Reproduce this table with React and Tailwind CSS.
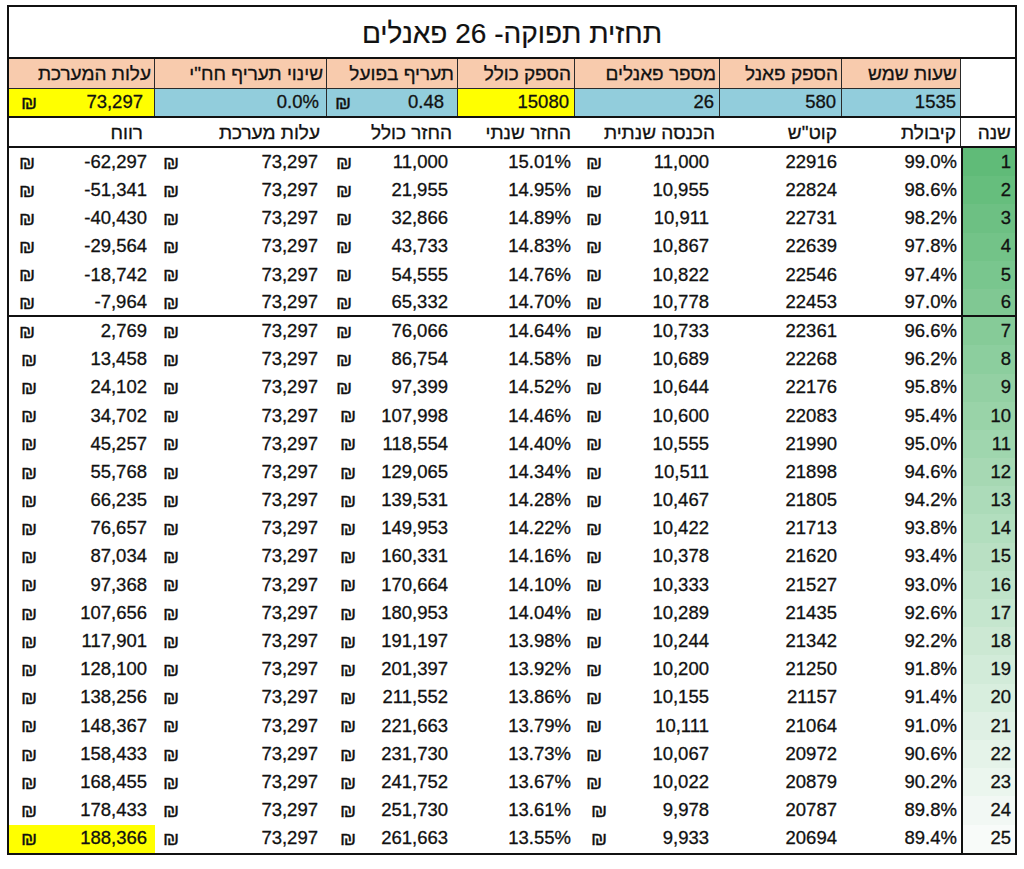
import React from "react";

// נתוני תחזית ל-25 שנה: רווח, החזר כולל, החזר שנתי, הכנסה שנתית, קוט"ש, קיבולת
const rows = [
  ["-62,297", "11,000", "15.01%", "11,000", "22916", "99.0%"],
  ["-51,341", "21,955", "14.95%", "10,955", "22824", "98.6%"],
  ["-40,430", "32,866", "14.89%", "10,911", "22731", "98.2%"],
  ["-29,564", "43,733", "14.83%", "10,867", "22639", "97.8%"],
  ["-18,742", "54,555", "14.76%", "10,822", "22546", "97.4%"],
  ["-7,964", "65,332", "14.70%", "10,778", "22453", "97.0%"],
  ["2,769", "76,066", "14.64%", "10,733", "22361", "96.6%"],
  ["13,458", "86,754", "14.58%", "10,689", "22268", "96.2%"],
  ["24,102", "97,399", "14.52%", "10,644", "22176", "95.8%"],
  ["34,702", "107,998", "14.46%", "10,600", "22083", "95.4%"],
  ["45,257", "118,554", "14.40%", "10,555", "21990", "95.0%"],
  ["55,768", "129,065", "14.34%", "10,511", "21898", "94.6%"],
  ["66,235", "139,531", "14.28%", "10,467", "21805", "94.2%"],
  ["76,657", "149,953", "14.22%", "10,422", "21713", "93.8%"],
  ["87,034", "160,331", "14.16%", "10,378", "21620", "93.4%"],
  ["97,368", "170,664", "14.10%", "10,333", "21527", "93.0%"],
  ["107,656", "180,953", "14.04%", "10,289", "21435", "92.6%"],
  ["117,901", "191,197", "13.98%", "10,244", "21342", "92.2%"],
  ["128,100", "201,397", "13.92%", "10,200", "21250", "91.8%"],
  ["138,256", "211,552", "13.86%", "10,155", "21157", "91.4%"],
  ["148,367", "221,663", "13.79%", "10,111", "21064", "91.0%"],
  ["158,433", "231,730", "13.73%", "10,067", "20972", "90.6%"],
  ["168,455", "241,752", "13.67%", "10,022", "20879", "90.2%"],
  ["178,433", "251,730", "13.61%", "9,978", "20787", "89.8%"],
  ["188,366", "261,663", "13.55%", "9,933", "20694", "89.4%"],
];

const GRID8 = "grid grid-cols-[146px_172px_131px_117px_145px_122px_119px_54px]";
const GRID7 = "grid grid-cols-[146px_172px_131px_117px_145px_122px_119px]";

/** סולם צבע ירוק-לבן לעמודת השנה, כמו עיצוב מותנה באקסל */
function yearColor(i) {
  const a = [0x60, 0xbb, 0x78];
  const b = [0xf8, 0xfb, 0xf9];
  const t = i / (rows.length - 1);
  const c = a.map((v, k) => Math.round(v + (b[k] - v) * t));
  return `rgb(${c[0]}, ${c[1]}, ${c[2]})`;
}

function Money({ value, className = "", shekel = "pl-[10px]", valuePad = "pr-[8px]" }) {
  return (
    <div className={`flex h-full items-center justify-between ${className}`}>
      <span className={`text-[19px] ${shekel}`}>₪</span>
      <span className={valuePad}>{value}</span>
    </div>
  );
}

function Heb({ children, className = "" }) {
  return (
    <div dir="rtl" className={`flex h-full items-center text-[19px] ${className}`}>
      {children}
    </div>
  );
}

function Num({ children, className = "", style }) {
  return (
    <div className={`flex h-full items-center justify-end ${className}`} style={style}>
      {children}
    </div>
  );
}

export default function App() {
  return (
    <div className="h-[869px] w-[1024px] bg-white pl-[7px] pt-[5px] font-['Liberation_Sans','DejaVu_Sans',sans-serif] text-[18.5px] leading-none text-[#111] [-webkit-text-stroke:0.3px_#111]">
      <div className="w-[1010px] border-2 border-[#111]">
        <div dir="rtl" className="flex h-[52px] items-center justify-center border-b-2 border-[#111] pt-[4px] text-[28px] [-webkit-text-stroke:0.2px_#111]">
          תחזית תפוקה- 26 פאנלים
        </div>

        <div className="flex border-b-2 border-[#111]">
          <div className="w-[952px]">
            <div className={`${GRID7} h-[30px] border-b border-[#2a2a2a] bg-[#f8cbad]`}>
              {[
                "עלות המערכת",
                'שינוי תעריף חח"י',
                "תעריף בפועל",
                "הספק כולל",
                "מספר פאנלים",
                "הספק פאנל",
                "שעות שמש",
              ].map((label) => (
                <Heb key={label} className="border-r border-[#2a2a2a] pr-[3px]">
                  {label}
                </Heb>
              ))}
            </div>
            <div className={`${GRID7} h-[27px]`}>
              <Money value="73,297" className="border-r border-[#2a2a2a] bg-[#ffff00]" shekel="pl-[12px]" valuePad="pr-[11px]" />
              <Num className="border-r border-[#2a2a2a] bg-[#92cddc] pr-[7px]">0.0%</Num>
              <Money value="0.48" className="border-r border-[#2a2a2a] bg-[#92cddc]" shekel="pl-[8px]" valuePad="pr-[13px]" />
              <Num className="border-r border-[#2a2a2a] bg-[#ffff00] pr-[5px]">15080</Num>
              <Num className="border-r border-[#2a2a2a] bg-[#92cddc] pr-[5px]">26</Num>
              <Num className="border-r border-[#2a2a2a] bg-[#92cddc] pr-[5px]">580</Num>
              <Num className="border-r border-[#2a2a2a] bg-[#92cddc] pr-[4px]">1535</Num>
            </div>
          </div>
          <div className="w-[54px]" />
        </div>

        <div className={`${GRID8} h-[30px] border-b-2 border-[#111]`}>
          <Heb className="pr-[12px]">רווח</Heb>
          <Heb className="pr-[7px]">עלות מערכת</Heb>
          <Heb className="pr-[6px]">החזר כולל</Heb>
          <Heb className="pr-[4px]">החזר שנתי</Heb>
          <Heb className="pr-[5px]">הכנסה שנתית</Heb>
          <Heb className="pr-[5px]">קוט"ש</Heb>
          <Heb className="border-r border-[#2a2a2a] pr-[4px]">קיבולת</Heb>
          <Heb className="pr-[4px]">שנה</Heb>
        </div>

        {rows.map((r, i) => {
          const last = i === rows.length - 1;
          const sixDigit = r[1].length > 6;
          const fourDigit = r[3].length < 6;
          return (
            <div
              key={i}
              className={`${GRID8} h-[28.2px] ${i === 5 ? "border-b-2 border-[#111]" : ""}`}
            >
              <Money
                value={r[0]}
                className={last ? "bg-[#ffff00]" : ""}
                shekel={i < 7 ? "pl-[10px]" : "pl-[12px]"}
                valuePad="pr-[8px]"
              />
              <Money value="73,297" shekel="pl-[8px]" valuePad="pr-[9px]" />
              <Money value={r[1]} shekel={sixDigit ? "pl-[13px]" : "pl-[9px]"} valuePad="pr-[10px]" />
              <Num className="pr-[4px]">{r[2]}</Num>
              <Money value={r[3]} shekel={fourDigit ? "pl-[16px]" : "pl-[11px]"} valuePad="pr-[11px]" />
              <Num className="pr-[5px]">{r[4]}</Num>
              <Num className="pr-[4px]">{r[5]}</Num>
              <Num className="border-l-2 border-[#111] pr-[4px]" style={{ backgroundColor: yearColor(i) }}>
                {i + 1}
              </Num>
            </div>
          );
        })}
      </div>
    </div>
  );
}
